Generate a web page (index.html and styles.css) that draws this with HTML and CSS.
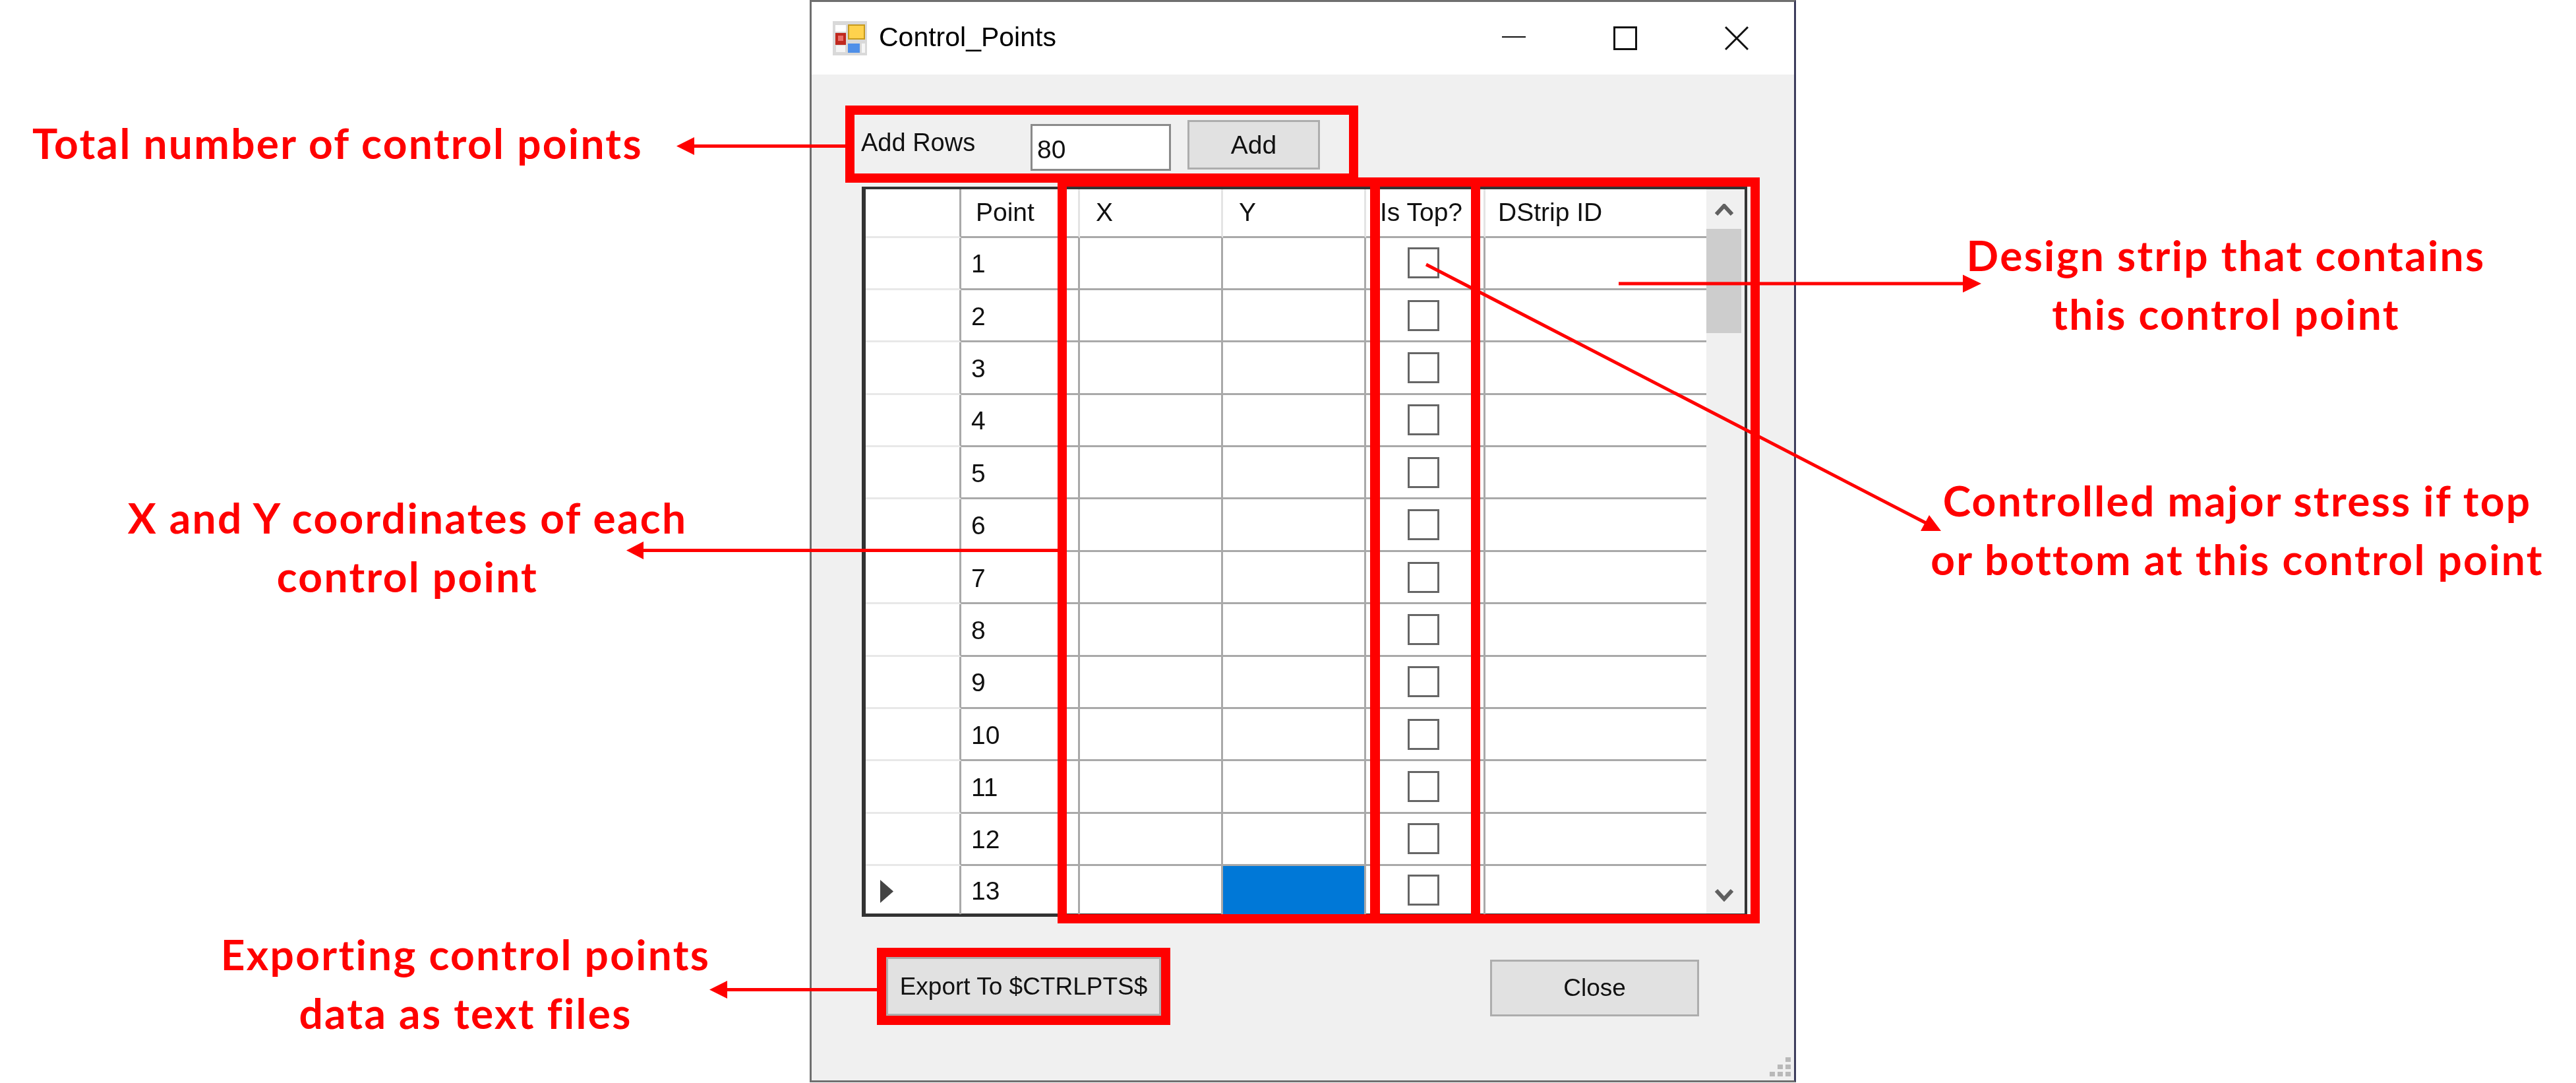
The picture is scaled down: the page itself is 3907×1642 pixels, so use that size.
FILE: index.html
```html
<!DOCTYPE html>
<html lang="en">

<head>
  <meta charset="UTF-8">
  <title>Control_Points</title>
  <link rel="stylesheet" href="styles.css">
</head>

<body>
  <div class="slide">
    <!-- notes left of the dialog -->
    <div class="notes notes-left">
      <p class="note note-total">Total number of control points</p>
      <p class="note note-xy">X and Y coordinates of each<br>control point</p>
      <p class="note note-export">Exporting control points<br>data as text files</p>
    </div>

    <div class="window">
      <div class="titlebar">
        <svg class="app-icon" width="52" height="52" viewBox="0 0 52 52">
          <rect width="52" height="52" fill="#d9d9d9" />
          <rect x="4" y="6" width="16" height="10" fill="#fff" />
          <rect x="5" y="37" width="14" height="10" fill="#f4f4f4" />
          <rect x="44" y="34" width="5" height="14" fill="#f6f6f6" />
          <rect x="24" y="6" width="24" height="21" fill="#ffd24d" stroke="#c79a1e" stroke-width="2" />
          <rect x="4" y="18" width="16" height="18" fill="#c0281e" />
          <rect x="8" y="22" width="8" height="8" fill="#e8706a" />
          <rect x="23" y="34" width="18" height="14" fill="#4f8fe8" />
        </svg>
        <span class="title">Control_Points</span>
        <div class="controls">
          <svg class="ctl" width="36" height="36" viewBox="0 0 36 36">
            <path d="M0 16H36" stroke="#111" stroke-width="2" />
          </svg>
          <svg class="ctl" width="36" height="36" viewBox="0 0 36 36">
            <rect x="1.5" y="1.5" width="33" height="33" fill="none" stroke="#111" stroke-width="3" />
          </svg>
          <svg class="ctl" width="36" height="36" viewBox="0 0 36 36">
            <path d="M1 1L35 35M35 1L1 35" stroke="#111" stroke-width="3" />
          </svg>
        </div>
      </div>

      <div class="toolbar">
        <label class="add-label">Add Rows</label>
        <input class="add-input" value="80">
        <button class="btn add-btn">Add</button>
      </div>

      <div class="grid">
        <div class="cols">
          <div class="rows">
            <div class="row head">
              <div class="cell rowhead"></div>
              <div class="cell num">Point</div>
              <div class="cell x">X</div>
              <div class="cell y">Y</div>
              <div class="cell top">Is Top?</div>
              <div class="cell strip">DStrip ID</div>
            </div>
            <div class="row"><div class="cell rowhead"></div><div class="cell num">1</div><div class="cell"></div><div class="cell"></div><div class="cell check"><span class="box"></span></div><div class="cell strip"></div></div>
            <div class="row"><div class="cell rowhead"></div><div class="cell num">2</div><div class="cell"></div><div class="cell"></div><div class="cell check"><span class="box"></span></div><div class="cell strip"></div></div>
            <div class="row"><div class="cell rowhead"></div><div class="cell num">3</div><div class="cell"></div><div class="cell"></div><div class="cell check"><span class="box"></span></div><div class="cell strip"></div></div>
            <div class="row"><div class="cell rowhead"></div><div class="cell num">4</div><div class="cell"></div><div class="cell"></div><div class="cell check"><span class="box"></span></div><div class="cell strip"></div></div>
            <div class="row"><div class="cell rowhead"></div><div class="cell num">5</div><div class="cell"></div><div class="cell"></div><div class="cell check"><span class="box"></span></div><div class="cell strip"></div></div>
            <div class="row"><div class="cell rowhead"></div><div class="cell num">6</div><div class="cell"></div><div class="cell"></div><div class="cell check"><span class="box"></span></div><div class="cell strip"></div></div>
            <div class="row"><div class="cell rowhead"></div><div class="cell num">7</div><div class="cell"></div><div class="cell"></div><div class="cell check"><span class="box"></span></div><div class="cell strip"></div></div>
            <div class="row"><div class="cell rowhead"></div><div class="cell num">8</div><div class="cell"></div><div class="cell"></div><div class="cell check"><span class="box"></span></div><div class="cell strip"></div></div>
            <div class="row"><div class="cell rowhead"></div><div class="cell num">9</div><div class="cell"></div><div class="cell"></div><div class="cell check"><span class="box"></span></div><div class="cell strip"></div></div>
            <div class="row"><div class="cell rowhead"></div><div class="cell num">10</div><div class="cell"></div><div class="cell"></div><div class="cell check"><span class="box"></span></div><div class="cell strip"></div></div>
            <div class="row"><div class="cell rowhead"></div><div class="cell num">11</div><div class="cell"></div><div class="cell"></div><div class="cell check"><span class="box"></span></div><div class="cell strip"></div></div>
            <div class="row"><div class="cell rowhead"></div><div class="cell num">12</div><div class="cell"></div><div class="cell"></div><div class="cell check"><span class="box"></span></div><div class="cell strip"></div></div>
            <div class="row last">
              <div class="cell rowhead">
                <svg width="20" height="35" viewBox="0 0 20 35"><path d="M0 0L20 17.5L0 35Z" fill="#444" /></svg>
              </div>
              <div class="cell num">13</div>
              <div class="cell"></div>
              <div class="cell selected"></div>
              <div class="cell check"><span class="box"></span></div>
              <div class="cell strip"></div>
            </div>
          </div>
          <div class="scrollbar">
            <svg class="arrow-up" width="28" height="18" viewBox="0 0 28 18"><path d="M2 16L14 3L26 16" fill="none" stroke="#606060" stroke-width="6" /></svg>
            <div class="thumb"></div>
            <svg class="arrow-down" width="28" height="20" viewBox="0 0 28 20"><path d="M2 3L14 16L26 3" fill="none" stroke="#606060" stroke-width="6" /></svg>
          </div>
        </div>
      </div>

      <div class="footer">
        <button class="btn export-btn">Export To $CTRLPTS$</button>
        <button class="btn close-btn">Close</button>
      </div>

      <svg class="grip" width="32" height="29" viewBox="0 0 32 29" fill="#b9b9b9">
        <rect x="24" y="0" width="8" height="7" />
        <rect x="12" y="11" width="8" height="7" />
        <rect x="24" y="11" width="8" height="7" />
        <rect x="0" y="22" width="8" height="7" />
        <rect x="12" y="22" width="8" height="7" />
        <rect x="24" y="22" width="8" height="7" />
      </svg>
    </div>

    <!-- notes right of the dialog -->
    <div class="notes notes-right">
      <p class="note note-strip">Design strip that contains<br>this control point</p>
      <p class="note note-stress">Controlled major stress if top<br>or bottom at this control point</p>
    </div>
  </div>

  <!-- red frames and arrows drawn over the dialog -->
  <svg class="marks" width="3907" height="1642" viewBox="0 0 3907 1642">
    <g fill="none" stroke="#f00" stroke-width="14">
      <rect x="1289" y="167" width="764" height="103" />
      <rect x="1611" y="276" width="474" height="1117" />
      <rect x="2086" y="276" width="152" height="1117" />
      <rect x="2238" y="276" width="424" height="1117" />
      <rect x="1337" y="1444" width="431" height="103" />
    </g>
    <g stroke="#f00" stroke-width="5">
      <path d="M1050 221.5H1282" />
      <path d="M973 834.5H1604" />
      <path d="M1100 1500.5H1330" />
      <path d="M2455 430H2980" />
      <path d="M2163 401L2925 795" />
    </g>
    <g fill="#f00">
      <path d="M1026 221.5L1053 208V235Z" />
      <path d="M950 834.5L976 821V848Z" />
      <path d="M1076 1500.5L1103 1487V1514Z" />
      <path d="M3005 430L2977 416.5V443.5Z" />
      <path d="M2944 805L2926 781L2913 805Z" />
    </g>
  </svg>
</body>

</html>
```

FILE: styles.css
```css
html,
body {
  margin: 0;
  background: #fff;
}

.slide {
  display: flex;
  width: 3907px;
  height: 1642px;
  overflow: hidden;
}

.marks {
  position: absolute;
  left: 0;
  top: 0;
}

/* NOTES */
.notes {
  flex: none;
  color: #f00;
  font-family: "Lato", "Liberation Sans", sans-serif;
  font-weight: 700;
  font-size: 64px;
  letter-spacing: 2.3px;
  line-height: 89px;
  text-align: center;
}

.notes-left {
  width: 1228px;
}

.notes-right {
  width: 1183px;
}

.note {
  margin: 0;
  white-space: nowrap;
}

.notes-left .note {
  width: 1000px;
}

.notes-right .note {
  width: 1100px;
}

.note-total {
  margin-left: 12px;
  margin-top: 172px;
}

.note-xy {
  margin-left: 118px;
  margin-top: 479px;
}

.note-export {
  margin-left: 206px;
  margin-top: 484px;
}

.note-strip {
  margin-left: 102px;
  margin-top: 342px;
}

.note-stress {
  margin-left: 119px;
  margin-top: 194px;
}

/* WINDOW */
.window {
  flex: none;
  position: relative;
  box-sizing: border-box;
  width: 1496px;
  height: 1641px;
  background: #f0f0f0;
  border: 3px solid #6f6f6f;
  border-right-color: #3d3d5c;
  color: #111;
  font-family: "Liberation Sans", Arial, sans-serif;
  font-size: 39px;
  filter: blur(0.7px);
}

.titlebar {
  display: flex;
  align-items: center;
  height: 110px;
  background: #fff;
  padding-left: 32px;
  padding-right: 69px;
}

.title {
  margin-left: 18px;
  margin-bottom: 4px;
  font-size: 41px;
  color: #000;
}

.controls {
  display: flex;
  gap: 133px;
  margin-left: auto;
}

.toolbar {
  display: flex;
  align-items: flex-start;
  padding: 69px 0 0 75px;
}

.add-label {
  width: 257px;
  margin-top: 12px;
  line-height: 45px;
  font-size: 38px;
}

.add-input {
  box-sizing: border-box;
  width: 213px;
  height: 71px;
  margin: 6px 0 0 0;
  padding: 6px 0 0 7px;
  background: #fff;
  border: 3px solid #8a8a8a;
  border-radius: 0;
  outline: none;
  color: #111;
  font: inherit;
}

.btn {
  box-sizing: border-box;
  padding: 0;
  background: #e1e1e1;
  border: 3px solid #adadad;
  border-radius: 0;
  color: #111;
  font: inherit;
}

.add-btn {
  width: 201px;
  height: 75px;
  margin-left: 25px;
}

/* GRID */
.grid {
  box-sizing: border-box;
  width: 1343px;
  height: 1107px;
  margin: 24px 0 0 76px;
  background: #fff;
  border: solid #333;
  border-width: 4px 4px 5px 6px;
}

.cols {
  display: flex;
  height: 100%;
}

.rows {
  flex: none;
  width: 1275px;
}

.row {
  display: grid;
  grid-template-columns: 145px 180px 217px 217px 181px 335px;
  height: 79.4px;
}

.row.head {
  height: 73.5px;
}

.row.last {
  height: 73px;
}

.cell {
  box-sizing: border-box;
  display: flex;
  align-items: center;
  padding-top: 3px;
  border-right: 3px solid #a9a9a9;
  border-bottom: 3px solid #a9a9a9;
}

.row.last .cell {
  border-bottom: 0;
}

.head .cell {
  padding-top: 0;
  border-right-color: #e4e4e4;
}

.head .rowhead {
  border-right-color: #a9a9a9;
}

.rowhead {
  border-bottom-color: #e8e8e8;
  padding-left: 22px;
}

.num {
  padding-left: 15px;
}

.head .num {
  padding-left: 22px;
}

.x,
.y {
  padding-left: 24px;
}

.top {
  padding-left: 21px;
}

.cell.strip {
  padding-left: 19px;
  border-right: 0;
}

.check {
  justify-content: center;
  padding-top: 0;
  padding-right: 4px;
}

.box {
  box-sizing: border-box;
  width: 48px;
  height: 47px;
  background: #fff;
  border: 3px solid #666;
}

.selected {
  background: #0078d7;
}

.scrollbar {
  flex: none;
  position: relative;
  width: 58px;
  background: #f0f0f0;
}

.arrow-up {
  position: absolute;
  left: 13px;
  top: 22px;
}

.arrow-down {
  position: absolute;
  left: 13px;
  bottom: 18px;
}

.thumb {
  width: 53px;
  height: 158px;
  margin-top: 60px;
  background: #cdcdcd;
}

/* FOOTER */
.footer {
  display: flex;
  align-items: flex-start;
  padding: 61px 0 0 113px;
  font-size: 37px;
}

.export-btn {
  width: 417px;
  height: 89px;
}

.close-btn {
  width: 317px;
  height: 86px;
  margin: 4px 0 0 499px;
}

.grip {
  position: absolute;
  right: 5px;
  bottom: 6px;
}
```
